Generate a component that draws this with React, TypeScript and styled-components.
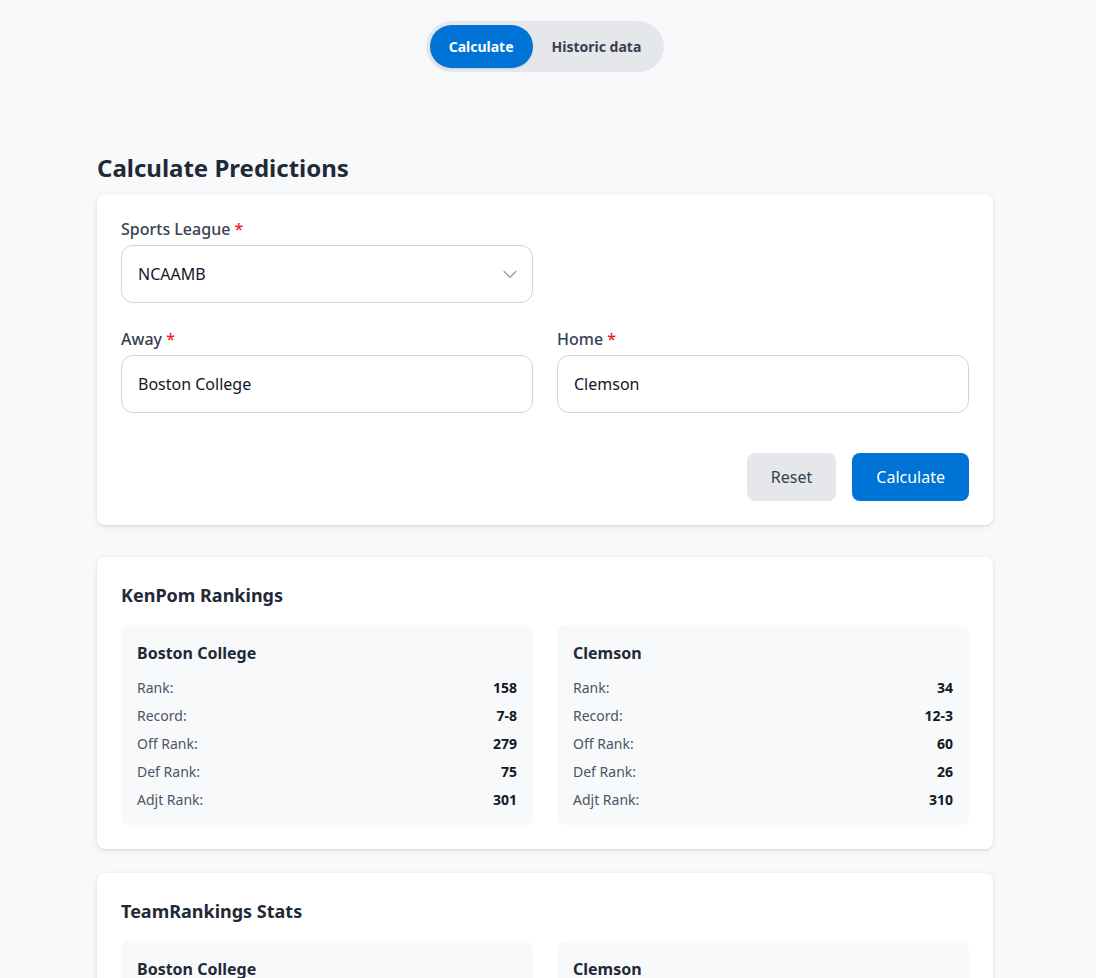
import React from "react";
import styled, { createGlobalStyle } from "styled-components";

const GlobalStyle = createGlobalStyle`
  * {
    box-sizing: border-box;
  }

  body {
    margin: 0;
    background: #f8f9fb;
    font-family: "Noto Sans", "Open Sans", sans-serif;
    color: #1f2937;
  }
`;

type TeamStats = {
  name: string;
  rows: [string, string][];
};

const kenPom: TeamStats[] = [
  {
    name: "Boston College",
    rows: [
      ["Rank:", "158"],
      ["Record:", "7-8"],
      ["Off Rank:", "279"],
      ["Def Rank:", "75"],
      ["Adjt Rank:", "301"],
    ],
  },
  {
    name: "Clemson",
    rows: [
      ["Rank:", "34"],
      ["Record:", "12-3"],
      ["Off Rank:", "60"],
      ["Def Rank:", "26"],
      ["Adjt Rank:", "310"],
    ],
  },
];

const teamRankings: TeamStats[] = [
  { name: "Boston College", rows: [] },
  { name: "Clemson", rows: [] },
];

export default function App() {
  return (
    <>
      <GlobalStyle />
      <Page>
        <TabBar>
          <Tab active>Calculate</Tab>
          <Tab>Historic data</Tab>
        </TabBar>

        <Main>
          <PageTitle>Calculate Predictions</PageTitle>

          <Card>
            <FieldGrid>
              <Field>
                <Label>
                  Sports League <Required>*</Required>
                </Label>
                <SelectBox>
                  <span>NCAAMB</span>
                  <svg width="20" height="20" viewBox="0 0 24 24" fill="none" stroke="#9ca3af" strokeWidth="1.8" strokeLinecap="round" strokeLinejoin="round">
                    <path d="M5 9l7 7 7-7" />
                  </svg>
                </SelectBox>
              </Field>
              <div />
              <Field>
                <Label>
                  Away <Required>*</Required>
                </Label>
                <TextInput defaultValue="Boston College" />
              </Field>
              <Field>
                <Label>
                  Home <Required>*</Required>
                </Label>
                <TextInput defaultValue="Clemson" />
              </Field>
            </FieldGrid>

            <Actions>
              <Button variant="secondary">Reset</Button>
              <Button variant="primary">Calculate</Button>
            </Actions>
          </Card>

          <Results>
            <StatsSection title="KenPom Rankings" teams={kenPom} />
            <StatsSection title="TeamRankings Stats" teams={teamRankings} />
          </Results>
        </Main>
      </Page>
    </>
  );
}

const StatsSection = ({ title, teams }: { title: string; teams: TeamStats[] }) => (
  <Card>
    <SectionTitle>{title}</SectionTitle>
    <TeamGrid>
      {teams.map((team) => (
        <TeamBox key={team.name}>
          <TeamName>{team.name}</TeamName>
          {team.rows.map(([label, value]) => (
            <StatRow key={label}>
              <StatLabel>{label}</StatLabel>
              <StatValue>{value}</StatValue>
            </StatRow>
          ))}
        </TeamBox>
      ))}
    </TeamGrid>
  </Card>
);

const Page = styled.div`
  min-height: 978px;
  padding: 21px 6px 0 0;
  display: flex;
  flex-direction: column;
  align-items: center;
`;

const TabBar = styled.div`
  display: flex;
  padding: 4px;
  border-radius: 999px;
  background: #e5e7eb;
`;

const Tab = styled.button<{ active?: boolean }>`
  height: 43px;
  padding: 0 19px;
  border: none;
  border-radius: 999px;
  font-family: inherit;
  font-size: 14px;
  font-weight: 700;
  cursor: pointer;
  background: ${({ active }) => (active ? "#0073d6" : "transparent")};
  color: ${({ active }) => (active ? "#ffffff" : "#374151")};
  box-shadow: ${({ active }) => (active ? "0 1px 2px rgba(0,0,0,0.1)" : "none")};
`;

const Main = styled.main`
  width: 896px;
  margin-top: 80px;
  display: flex;
  flex-direction: column;
  gap: 32px;
`;

const Results = styled.div`
  display: flex;
  flex-direction: column;
  gap: 24px;
`;

const PageTitle = styled.h1`
  margin: 0 0 -22px;
  font-size: 24px;
  font-weight: 700;
  line-height: 32px;
  color: #1f2937;
`;

const Card = styled.section`
  background: #ffffff;
  border-radius: 8px;
  padding: 24px;
  box-shadow: 0 1px 3px rgba(0, 0, 0, 0.1), 0 2px 8px rgba(0, 0, 0, 0.06);
`;

const FieldGrid = styled.div`
  display: grid;
  grid-template-columns: 1fr 1fr;
  column-gap: 24px;
  row-gap: 25px;
`;

const Field = styled.div`
  display: flex;
  flex-direction: column;
  gap: 5px;
`;

const Label = styled.label`
  font-size: 16px;
  font-weight: 500;
  line-height: 22px;
  color: #374151;
`;

const Required = styled.span`
  color: #ef1c1c;
`;

const SelectBox = styled.div`
  height: 58px;
  padding: 0 12px 0 16px;
  display: flex;
  align-items: center;
  justify-content: space-between;
  border: 1px solid #d1d5db;
  border-radius: 12px;
  background: #ffffff;
  font-size: 16px;
  color: #111827;
`;

const TextInput = styled.input`
  height: 58px;
  padding: 0 16px;
  border: 1px solid #d1d5db;
  border-radius: 12px;
  background: #ffffff;
  font-family: inherit;
  font-size: 16px;
  color: #111827;
  outline: none;
`;

const Actions = styled.div`
  margin-top: 40px;
  display: flex;
  justify-content: flex-end;
  gap: 16px;
`;

const Button = styled.button<{ variant: "primary" | "secondary" }>`
  height: 48px;
  padding: 0 24px;
  border: none;
  border-radius: 8px;
  font-family: inherit;
  font-size: 16px;
  cursor: pointer;
  background: ${({ variant }) => (variant === "primary" ? "#0073d6" : "#e5e7eb")};
  color: ${({ variant }) => (variant === "primary" ? "#ffffff" : "#374151")};
`;

const SectionTitle = styled.h2`
  margin: 2px 0 18px;
  font-size: 18px;
  font-weight: 700;
  line-height: 24px;
  color: #1f2937;
`;

const TeamGrid = styled.div`
  display: grid;
  grid-template-columns: 1fr 1fr;
  gap: 24px;
`;

const TeamBox = styled.div`
  min-height: 56px;
  padding: 16px 16px 12px;
  border-radius: 8px;
  background: #f8f9fb;
`;

const TeamName = styled.h3`
  margin: 0 0 8px;
  font-size: 16px;
  font-weight: 700;
  line-height: 24px;
  color: #1f2937;
`;

const StatRow = styled.div`
  display: flex;
  justify-content: space-between;
  align-items: center;
  height: 28px;
  font-size: 14px;
`;

const StatLabel = styled.span`
  color: #4b5563;
`;

const StatValue = styled.span`
  font-weight: 700;
  color: #111827;
`;
